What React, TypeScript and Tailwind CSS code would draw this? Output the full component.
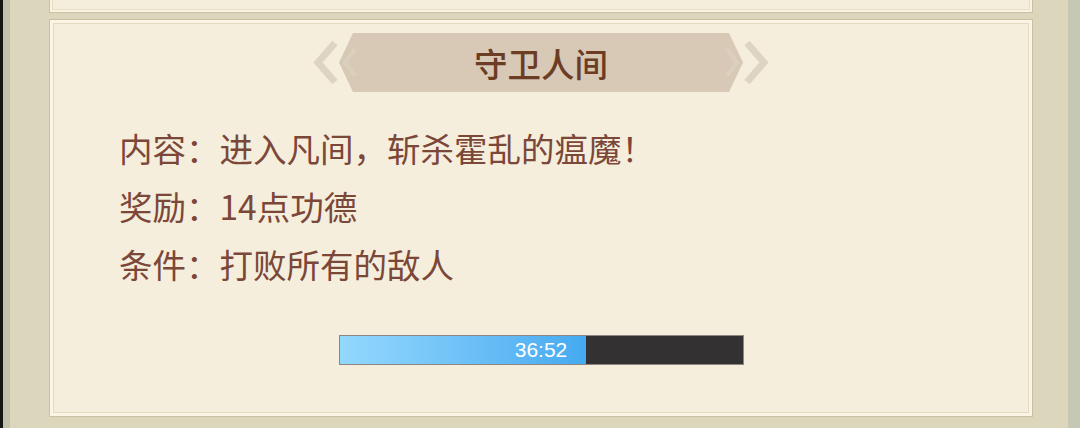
const cjk = { fontFamily: '"Noto Sans CJK SC", "Noto Sans", sans-serif' };

function Banner({ title }: { title: string }) {
  return (
    <div className="relative mx-auto mt-[9px] flex h-[59px] w-[460px] items-center justify-center">
      <svg className="absolute inset-0" width="460" height="59" viewBox="0 0 460 59">
        <polyline points="24,10 7,29.5 24,49" fill="none" stroke="#ddd5c1" strokeWidth="7" />
        <polyline points="436,10 453,29.5 436,49" fill="none" stroke="#ddd5c1" strokeWidth="7" />
        <polygon points="28,29.5 42,0 418,0 432,29.5 418,59 42,59" fill="#d7c9b5" />
        <polyline points="44,16 34,29.5 44,43" fill="none" stroke="#dbcfbd" strokeWidth="4" />
        <polyline points="416,16 426,29.5 416,43" fill="none" stroke="#dbcfbd" strokeWidth="4" />
      </svg>
      <span className="relative text-[33.5px] font-medium leading-none text-[#6c3c24]" style={cjk}>
        {title}
      </span>
    </div>
  );
}

function ProgressBar({ ratio, label }: { ratio: number; label: string }) {
  return (
    <div className="relative mx-auto mt-[42px] h-[30px] w-[405px] border border-[#8b8780] bg-[#333132]">
      <div
        className="h-full bg-gradient-to-r from-[#93d8fd] to-[#45aaf0]"
        style={{ width: `${ratio * 100}%` }}
      />
      <div className="absolute inset-0 flex items-center justify-center font-['Liberation_Sans',sans-serif] text-[21px] text-white">
        {label}
      </div>
    </div>
  );
}

const rows = [
  ['内容', '进入凡间，斩杀霍乱的瘟魔！'],
  ['奖励', '14点功德'],
  ['条件', '打败所有的敌人'],
];

export default function App() {
  return (
    <div className="flex h-[428px] w-[1080px] overflow-hidden bg-[#dcd6bc]">
      <div className="w-[3px] bg-[#161614]" />
      <div className="w-[7px] bg-[#c3c2ac]" />
      <div className="flex flex-1 flex-col pl-[39px] pr-[35px]">
        <div className="h-[13px] border-x border-b border-[#cbc1a2] bg-[#f9f3e2] px-[2px] pb-[2px]">
          <div className="h-full border-x border-b border-[#e6ddc4] bg-[#f5eedc]" />
        </div>
        <div className="mt-[6px] h-[398px] border border-[#cbc1a2] bg-[#faf5e5] p-[3px]">
          <div className="flex h-full flex-col border border-[#e3dac1] bg-[#f5eedc]">
            <Banner title="守卫人间" />
            <div className="mt-[27px] pl-[65px] text-[33.5px] leading-[58px] text-[#7b4739]" style={cjk}>
              {rows.map(([k, v]) => (
                <div key={k}>
                  {k}：{v}
                </div>
              ))}
            </div>
            <ProgressBar ratio={0.612} label="36:52" />
          </div>
        </div>
      </div>
      <div className="w-[12px] bg-[#c7c8b4]" />
    </div>
  );
}
